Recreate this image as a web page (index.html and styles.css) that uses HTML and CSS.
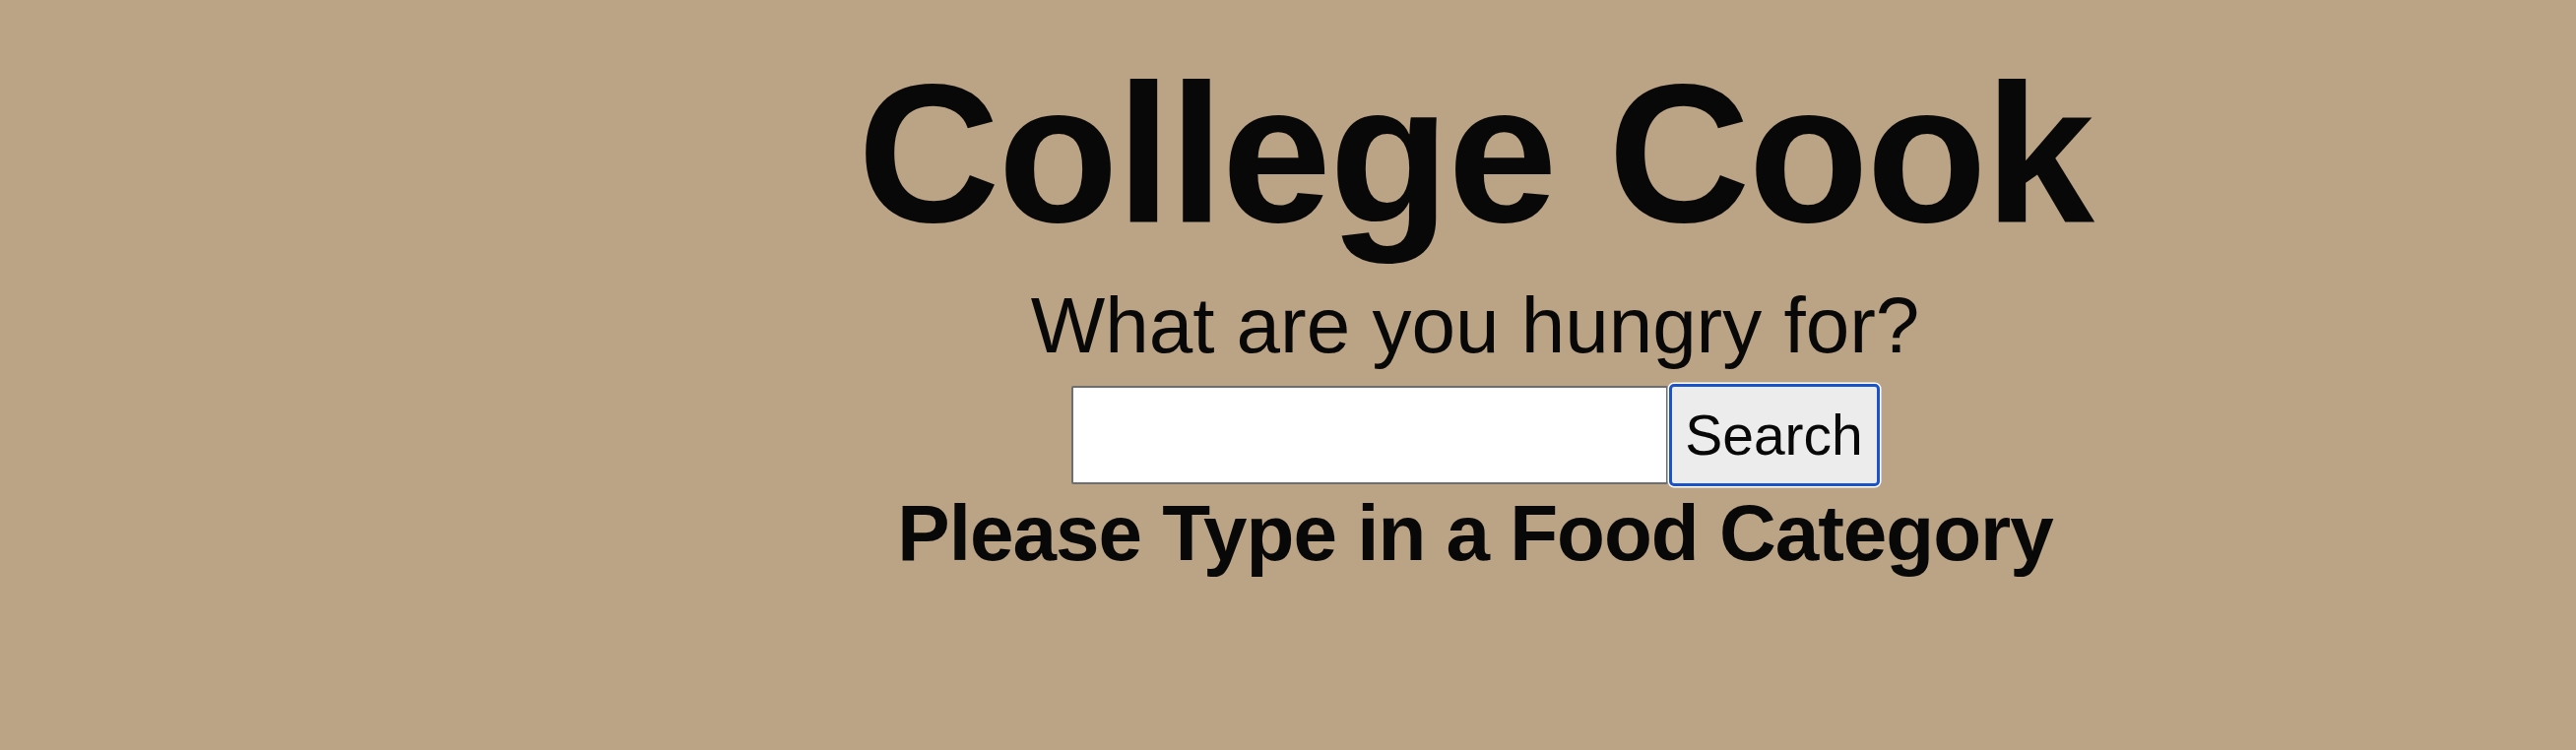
FILE: index.html
```html
<!DOCTYPE html>
<html lang="en">
<head>
<meta charset="utf-8">
<title>College Cook</title>
<link rel="stylesheet" href="styles.css">
</head>
<body>
<main class="page">
  <h1 class="title">College Cook</h1>
  <p class="prompt">What are you hungry for?</p>
  <form class="search" onsubmit="return false;">
    <input class="search-input" type="text" aria-label="Food category">
    <button class="search-button" type="submit">Search</button>
  </form>
  <h2 class="message">Please Type in a Food Category</h2>
</main>
</body>
</html>
```

FILE: styles.css
```css
html, body {
  margin: 0;
  padding: 0;
}

body {
  background: #bba385;
  color: #080808;
  font-family: "Liberation Sans", Arial, Helvetica, sans-serif;
  min-height: 762px;
}

.page {
  display: flex;
  flex-direction: column;
  align-items: center;
  padding-left: 380px;
}

.title {
  margin: 41px 0 14px;
  font-size: 200px;
  line-height: 230px;
  font-weight: 700;
  letter-spacing: -2px;
}

.prompt {
  margin: 0;
  font-size: 80px;
  line-height: 92px;
  font-weight: 400;
}

.search {
  display: flex;
  align-items: center;
  gap: 1px;
  margin-top: 13px;
}

.search-input {
  box-sizing: border-box;
  width: 606px;
  height: 100px;
  margin: 0;
  border: 2px solid #6e6e6e;
  border-radius: 2px;
  background: #ffffff;
  font-family: "Liberation Sans", Arial, sans-serif;
  font-size: 50px;
  padding: 0 8px;
}

.search-button {
  box-sizing: border-box;
  width: 214px;
  height: 104px;
  margin: 0;
  padding: 0;
  border: 3px solid #1a52c8;
  border-radius: 5px;
  background: #ececec;
  box-shadow: 0 0 0 1.5px #ffffff;
  color: #080808;
  font-family: "Liberation Sans", Arial, sans-serif;
  font-size: 57px;
  line-height: 1;
}

.message {
  margin: 2px 0 0;
  font-size: 80px;
  line-height: 92px;
  font-weight: 700;
  letter-spacing: -1px;
}
```
